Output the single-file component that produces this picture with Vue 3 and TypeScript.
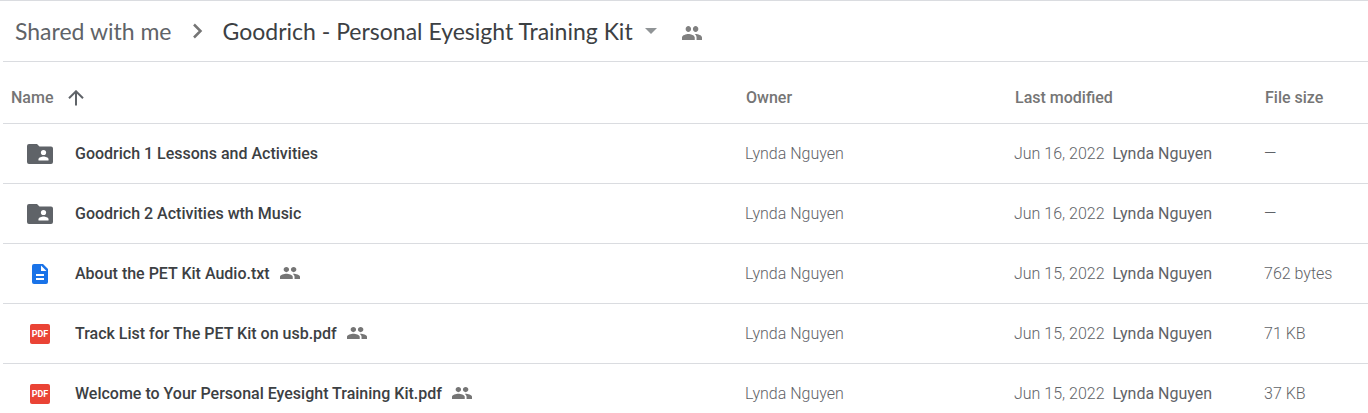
<script setup lang="ts">
type Kind = 'folder' | 'doc' | 'pdf'

interface Entry {
  name: string
  kind: Kind
  shared: boolean
  owner: string
  date: string
  editor: string
  size: string
}

const peoplePath =
  'M16 11c1.66 0 2.99-1.34 2.99-3S17.66 5 16 5s-3 1.34-3 3 1.34 3 3 3zm-8 0c1.66 0 2.99-1.34 2.99-3S9.66 5 8 5 5 6.34 5 8s1.34 3 3 3zm0 2c-2.33 0-7 1.17-7 3.5V19h14v-2.5c0-2.33-4.67-3.5-7-3.5zm8 0c-.29 0-.62.02-.97.05 1.16.84 1.97 1.97 1.97 3.45V19h6v-2.5c0-2.33-4.67-3.5-7-3.5z'

const owner = 'Lynda Nguyen'

const entries: Entry[] = [
  { name: 'Goodrich 1 Lessons and Activities', kind: 'folder', shared: false, owner, date: 'Jun 16, 2022', editor: owner, size: '—' },
  { name: 'Goodrich 2 Activities wth Music', kind: 'folder', shared: false, owner, date: 'Jun 16, 2022', editor: owner, size: '—' },
  { name: 'About the PET Kit Audio.txt', kind: 'doc', shared: true, owner, date: 'Jun 15, 2022', editor: owner, size: '762 bytes' },
  { name: 'Track List for The PET Kit on usb.pdf', kind: 'pdf', shared: true, owner, date: 'Jun 15, 2022', editor: owner, size: '71 KB' },
  { name: 'Welcome to Your Personal Eyesight Training Kit.pdf', kind: 'pdf', shared: true, owner, date: 'Jun 15, 2022', editor: owner, size: '37 KB' },
]
</script>

<template>
  <main class="drive">
    <nav class="crumbs" aria-label="Breadcrumb">
      <a class="crumb" href="#">Shared with me</a>
      <svg class="chevron" viewBox="0 0 12 16" aria-hidden="true">
        <path d="M2 1.5 8.5 8 2 14.5" />
      </svg>
      <button class="current" type="button">
        <span>Goodrich - Personal Eyesight Training Kit</span>
        <svg class="caret" viewBox="0 0 12 6" aria-hidden="true"><path d="M0 0h12L6 6z" /></svg>
      </button>
      <button class="share" type="button" aria-label="Shared">
        <svg class="people" viewBox="1 5 22 14" preserveAspectRatio="none" aria-hidden="true"><path :d="peoplePath" /></svg>
      </button>
    </nav>

    <table class="files">
      <thead>
        <tr>
          <th class="col-name" scope="col">
            <button class="sort" type="button">
              <span>Name</span>
              <svg class="arrow" viewBox="0 0 16 16" aria-hidden="true">
                <path d="M8 15.5V1.5M1 8.3 8 1.3l7 7" />
              </svg>
            </button>
          </th>
          <th class="col-owner" scope="col">Owner</th>
          <th class="col-modified" scope="col">Last modified</th>
          <th class="col-size" scope="col">File size</th>
        </tr>
      </thead>
      <tbody>
        <tr v-for="entry in entries" :key="entry.name">
          <td>
            <div class="file">
              <span class="icon">
                <svg v-if="entry.kind === 'folder'" class="folder" viewBox="0 0 26 20" aria-hidden="true">
                  <path fill="#5f6368" d="M2 0h8l2.500 2.500H24a2 2 0 0 1 2 2V18a2 2 0 0 1-2 2H2a2 2 0 0 1-2-2V2a2 2 0 0 1 2-2z" />
                  <circle fill="#fff" cx="16.500" cy="8.500" r="2.600" />
                  <path fill="#fff" d="M11.500 16.500v-1.200c0-1.800 3.300-2.700 5-2.700s5 .9 5 2.700v1.200z" />
                </svg>
                <svg v-else-if="entry.kind === 'doc'" class="doc" viewBox="0 0 16 20" aria-hidden="true">
                  <path fill="#1a73e8" d="M2 0h9l5 5v13a2 2 0 0 1-2 2H2a2 2 0 0 1-2-2V2a2 2 0 0 1 2-2z" />
                  <path fill="#fff" d="M9 1.500V7h5.500zM4 10h8v2H4zM4 14h8v2H4z" />
                </svg>
                <svg v-else class="pdf" viewBox="0 0 20 20" role="img" aria-label="PDF">
                  <rect width="20" height="20" rx="2" fill="#ea4335" />
                  <text x="10" y="13" text-anchor="middle">PDF</text>
                </svg>
              </span>
              <span class="name">{{ entry.name }}</span>
              <svg v-if="entry.shared" class="people small" viewBox="1 5 22 14" preserveAspectRatio="none" role="img" aria-label="Shared">
                <path :d="peoplePath" />
              </svg>
            </div>
          </td>
          <td>{{ entry.owner }}</td>
          <td>{{ entry.date }} <span class="editor">{{ entry.editor }}</span></td>
          <td>{{ entry.size }}</td>
        </tr>
      </tbody>
    </table>
  </main>
</template>

<style>
body {
  margin: 0;
  background: #fff;
  overflow: hidden;
}
</style>

<style scoped>
.drive {
  font-family: Roboto, "Liberation Sans", sans-serif;
  font-size: 16px;
  color: #757575;
  border-top: 1px solid #dadce0;
}

button {
  display: flex;
  align-items: center;
  padding: 0;
  border: 0;
  background: none;
  color: inherit;
  font: inherit;
  cursor: pointer;
}

.crumbs {
  display: flex;
  align-items: center;
  height: 60px;
  margin-left: 3px;
  padding-left: 12px;
  border-bottom: 1px solid #dadce0;
  font-family: Lato, Roboto, sans-serif;
  font-size: 23px;
  white-space: nowrap;
}

.crumb {
  color: #5f6368;
  text-decoration: none;
}

.chevron {
  width: 12px;
  height: 16px;
  margin: 0 19px 0 20px;
  fill: none;
  stroke: #757575;
  stroke-width: 2.5;
}

.current {
  gap: 12px;
  color: #3c4043;
}

.caret {
  width: 12px;
  height: 6px;
  fill: #909496;
}

.share {
  margin: 4px 0 0 25px;
}

.people {
  display: block;
  flex: none;
  width: 20px;
  height: 14px;
  fill: #808080;
}

.people.small {
  height: 12px;
  margin-bottom: 2px;
  fill: #757575;
}

.files {
  width: calc(100% - 3px);
  margin-left: 3px;
  table-layout: fixed;
  border-collapse: separate;
  border-spacing: 0;
  white-space: nowrap;
}

th,
td {
  height: 59px;
  padding: 0;
  text-align: left;
  vertical-align: middle;
  border-bottom: 1px solid #dadce0;
}

th {
  height: 62px;
  padding: 10px 0 0 1px;
  box-sizing: border-box;
  font-weight: 500;
}

td {
  font-weight: 300;
  color: #5f6368;
}

th.col-name {
  padding-left: 8px;
}

.col-owner {
  width: 269px;
}

.col-modified {
  width: 250px;
}

.col-size {
  width: 104px;
}

.sort {
  gap: 15px;
}

.arrow {
  width: 16px;
  height: 16px;
  fill: none;
  stroke: #5f6368;
  stroke-width: 2;
}

.file {
  display: flex;
  align-items: center;
}

.icon {
  display: flex;
  justify-content: center;
  width: 26px;
  margin: 0 22px 0 24px;
}

.folder {
  width: 26px;
  height: 20px;
}

.doc {
  width: 16px;
  height: 20px;
}

.pdf {
  width: 20px;
  height: 20px;
}

.pdf text {
  fill: #fff;
  font: 700 9px Roboto, sans-serif;
}

.name {
  margin-right: 10px;
  color: #3c4043;
  font-weight: 500;
}

.editor {
  margin-left: 4px;
  font-weight: 400;
}
</style>
